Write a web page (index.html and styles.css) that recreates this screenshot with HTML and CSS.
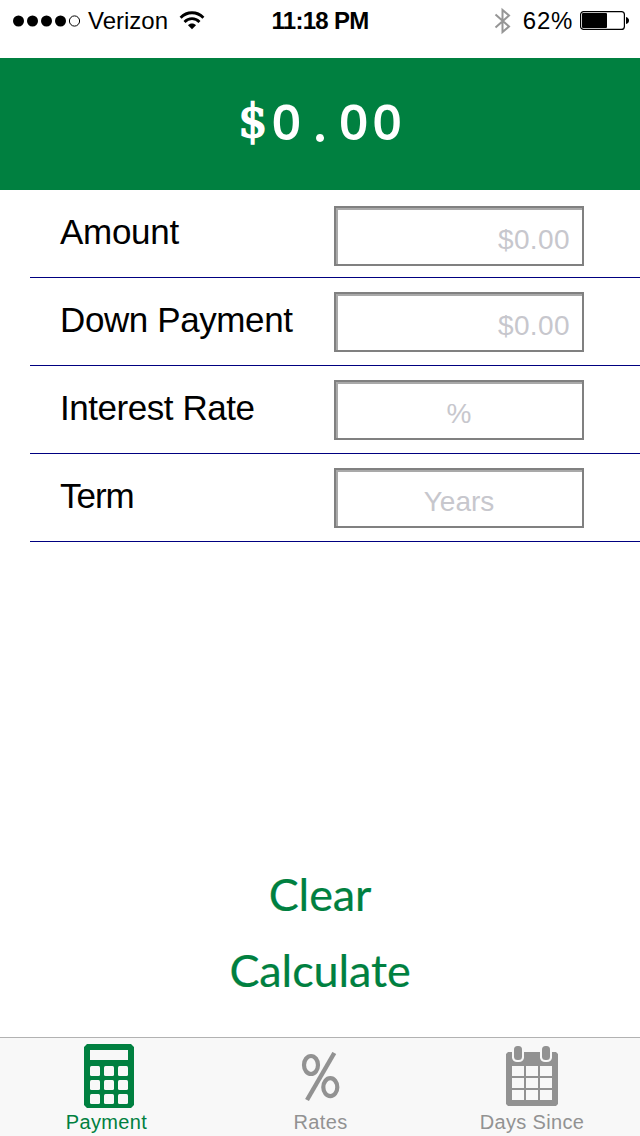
FILE: index.html
```html
<!DOCTYPE html>
<html lang="en">
<head>
<meta charset="utf-8">
<title>Payment</title>
<link rel="stylesheet" href="styles.css">
</head>
<body>
<div class="app">
  <header class="status">
    <div class="carrier">
      <svg class="signal" width="68" height="12" viewBox="0 0 68 12"><circle cx="5.5" cy="6" r="5.5"/><circle cx="19.5" cy="6" r="5.5"/><circle cx="33.5" cy="6" r="5.5"/><circle cx="47.5" cy="6" r="5.5"/><circle cx="61.5" cy="6" r="5.1" fill="none" stroke="#000"/></svg>
      <span class="carrier-name">Verizon</span>
      <svg class="wifi" width="26" height="19" viewBox="0 0 26 19"><g fill="none" stroke="#000" stroke-width="2.8"><path d="M1.6 6.7C8 .1 18 .1 24.4 6.7"/><path d="M5.5 10.9C9.8 6.6 16.2 6.6 20.5 10.9"/></g><path d="M9 14.2C11 12 15 12 17 14.2L13 18.2Z"/></svg>
    </div>
    <div class="time">11:18 PM</div>
    <div class="power">
      <svg class="bluetooth" width="18" height="28" viewBox="0 0 18 28"><path d="M1.5 7.5L15 19.5L8.5 25V3L15 8.5L1.5 20.5" fill="none" stroke="#969696" stroke-width="2"/></svg>
      <span class="percent">62%</span>
      <svg class="battery" width="50" height="20" viewBox="0 0 50 20"><rect x=".6" y=".6" width="43.8" height="17.8" rx="3" fill="#fff" stroke="#000" stroke-width="1.2"/><rect x="2" y="2" width="25" height="15" rx="1"/><path d="M46 6Q49 7 49 9.5T46 13Z"/></svg>
    </div>
  </header>
  <div class="result"><span class="digit dollar">$</span><span class="digit">0</span><span class="digit point">.</span><span class="digit">0</span><span class="digit">0</span></div>
  <main class="form">
    <label class="row first"><span class="label amount">Amount</span><span class="field money">$0.00</span></label>
    <label class="row"><span class="label down">Down Payment</span><span class="field money">$0.00</span></label>
    <label class="row"><span class="label interest">Interest Rate</span><span class="field">%</span></label>
    <label class="row"><span class="label term">Term</span><span class="field">Years</span></label>
  </main>
  <div class="actions">
    <div class="action">Clear</div>
    <div class="action">Calculate</div>
  </div>
  <nav class="tabs">
    <div class="tab active">
      <svg class="icon calculator" width="50" height="64" viewBox="0 0 50 64"><path fill="#008040" fill-rule="evenodd" d="M3 0H47L50 3V61L47 64H3L0 61V3ZM6 6V16H44V6Z"/><g fill="#f8f8f8"><rect x="6" y="22" width="10" height="10" rx="1.5"/><rect x="20" y="22" width="10" height="10" rx="1.5"/><rect x="34" y="22" width="10" height="10" rx="1.5"/><rect x="6" y="36" width="10" height="10" rx="1.5"/><rect x="20" y="36" width="10" height="10" rx="1.5"/><rect x="34" y="36" width="10" height="10" rx="1.5"/><rect x="6" y="50" width="10" height="10" rx="1.5"/><rect x="20" y="50" width="10" height="10" rx="1.5"/><rect x="34" y="50" width="10" height="10" rx="1.5"/></g></svg>
      <span class="tab-label">Payment</span>
    </div>
    <div class="tab">
      <svg class="icon rate" width="40" height="50" viewBox="0 0 40 50" fill="none" stroke="#929292"><ellipse cx="10" cy="13" rx="7" ry="9" stroke-width="4.2"/><ellipse cx="29.3" cy="35.2" rx="7" ry="9" stroke-width="4.2"/><path d="M33.3 1L6 48" stroke-width="4.4"/></svg>
      <span class="tab-label">Rates</span>
    </div>
    <div class="tab">
      <svg class="icon calendar" width="52" height="60" viewBox="0 0 52 60"><path fill="#929292" d="M2 6H6V12Q7 16 11 16H13Q17 16 18 12V6H34V12Q35 16 39 16H41Q45 16 46 12V6H50L52 8V58L50 60H2L0 58V8Z"/><rect x="8" y="0" width="8" height="14" rx="3.5" fill="#929292"/><rect x="36" y="0" width="8" height="14" rx="3.5" fill="#929292"/><path fill="#f8f8f8" d="M6 20H18V30H6ZM20 20H32V30H20ZM34 20H46V30H34ZM6 32H18V42H6ZM20 32H32V42H20ZM34 32H46V42H34ZM6 44H18V54H6ZM20 44H32V54H20ZM34 44H46V54H34Z"/></svg>
      <span class="tab-label">Days Since</span>
    </div>
  </nav>
</div>
</body>
</html>
```
FILE: styles.css
```css
* { box-sizing: border-box; }
body { margin: 0; background: #fff; color: #000; font-family: "Liberation Sans", Arial, sans-serif; }
svg { display: block; flex: none; }
.app { width: 640px; height: 1136px; display: flex; flex-direction: column; overflow: hidden; }
.status { height: 58px; display: grid; grid-template-columns: 240px 160px 240px; font-size: 24px; line-height: 28px; padding-top: 7px; }
.carrier, .power { display: flex; align-items: flex-start; }
.signal { margin: 8px 0 0 13px; }
.carrier-name { margin-left: 7px; letter-spacing: 0; }
.wifi { margin: 4px 0 0 11px; }
.time { text-align: center; font-weight: 700; letter-spacing: -.7px; white-space: nowrap; }
.power { justify-content: flex-end; padding-right: 10px; }
.bluetooth { margin-right: 11px; }
.percent { margin-right: 7px; letter-spacing: .7px; }
.battery { margin-top: 4px; }
.result { height: 132px; background: #008040; color: #fff; display: flex; justify-content: center; padding-top: 34px; }
.digit { width: 33.6px; text-align: center; font-size: 49px; line-height: 60px; -webkit-text-stroke: 1.8px #fff; }
.dollar { font-family: "DejaVu Serif", serif; font-size: 46px; line-height: 59px; -webkit-text-stroke: 1.6px #fff; }
.point { font-family: Lato, sans-serif; }
.form { height: 352px; padding-left: 30px; }
.row { height: 88px; border-bottom: 1px solid #000080; display: flex; justify-content: space-between; padding: 14px 56px 0 30px; }
.first { padding-top: 16px; }
.label { font-size: 35px; line-height: 40px; margin-top: 8px; white-space: nowrap; }
.amount { margin-top: 6px; letter-spacing: -.3px; }
.down { letter-spacing: -.4px; }
.interest { letter-spacing: -.45px; }
.term { letter-spacing: -1px; }
.field { width: 250px; height: 60px; border: 2px solid #808080; box-shadow: inset 2px 2px #a9a9a9; color: #c7c7cd; font-size: 28px; line-height: 32px; padding: 16px 12px 0; text-align: center; }
.money { text-align: right; letter-spacing: .4px; }
.actions { flex: 1; display: flex; flex-direction: column; justify-content: flex-end; align-items: center; padding-bottom: 29px; color: #008040; font-family: Lato, sans-serif; }
.action { font-size: 45px; line-height: 76px; letter-spacing: -.1px; -webkit-text-stroke: .2px #008040; }
.tabs { height: 99px; background: #f8f8f8; border-top: 1px solid #b2b2b2; display: grid; grid-template-columns: 213px 215px 208px; color: #929292; }
.tab { display: flex; flex-direction: column; align-items: center; }
.active { color: #008040; }
.tab-label { font-size: 20px; line-height: 24px; letter-spacing: .35px; margin-top: auto; margin-bottom: 2px; }
.icon { margin-top: 6px; }
.calculator { margin-left: 5px; }
.rate { margin-top: 14px; }
.calendar { margin-top: 8px; }
```
